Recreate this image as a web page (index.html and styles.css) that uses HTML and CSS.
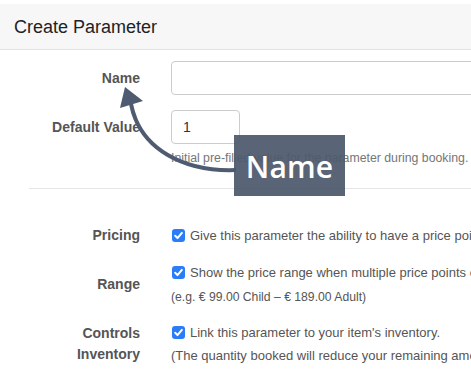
FILE: index.html
```html
<!DOCTYPE html>
<html lang="en">
<head>
<meta charset="utf-8">
<title>Create Parameter</title>
<link rel="stylesheet" href="styles.css">
</head>
<body>
<div class="page">
  <div class="modal-header">
    <h1 class="modal-title">Create Parameter</h1>
  </div>
  <form class="form">
    <div class="row row-name">
      <label class="label">Name</label>
      <div class="control"><input class="input input-wide" type="text"></div>
    </div>
    <div class="row row-default">
      <label class="label label-input">Default Value</label>
      <div class="control">
        <input class="input input-small" type="text" value="1">
        <p class="help">Initial pre-filled value for the parameter during booking.</p>
      </div>
    </div>
    <hr class="divider">
    <div class="row row-pricing">
      <label class="label">Pricing</label>
      <div class="control">
        <div class="check-line"><span class="checkbox"><svg viewBox="0 0 13 13" width="13" height="13"><path d="M3.2 6.8 L5.5 9.1 L9.9 3.9" fill="none" stroke="#fff" stroke-width="2" stroke-linecap="round" stroke-linejoin="round"/></svg></span><span class="check-text">Give this parameter the ability to have a price point.</span></div>
      </div>
    </div>
    <div class="row row-range">
      <label class="label">Range</label>
      <div class="control">
        <div class="check-line"><span class="checkbox"><svg viewBox="0 0 13 13" width="13" height="13"><path d="M3.2 6.8 L5.5 9.1 L9.9 3.9" fill="none" stroke="#fff" stroke-width="2" stroke-linecap="round" stroke-linejoin="round"/></svg></span><span class="check-text">Show the price range when multiple price points exist.</span></div>
        <p class="note note-range">(e.g. € 99.00 Child – € 189.00 Adult)</p>
      </div>
    </div>
    <div class="row row-inventory">
      <label class="label">Controls Inventory</label>
      <div class="control">
        <div class="check-line"><span class="checkbox"><svg viewBox="0 0 13 13" width="13" height="13"><path d="M3.2 6.8 L5.5 9.1 L9.9 3.9" fill="none" stroke="#fff" stroke-width="2" stroke-linecap="round" stroke-linejoin="round"/></svg></span><span class="check-text">Link this parameter to your item's inventory.</span></div>
        <p class="note note-inv">(The quantity booked will reduce your remaining amount.)</p>
      </div>
    </div>
  </form>

  <svg class="arrow" width="471" height="374" viewBox="0 0 471 374">
    <path d="M236 170 C185 172 140 150 131 104" fill="none" stroke="#4e5b70" stroke-width="4"/>
    <polygon points="125,87 120,108 143,101" fill="#4e5b70"/>
  </svg>
  <div class="callout">Name</div>
</div>
</body>
</html>
```

FILE: styles.css
```css
html, body {
  margin: 0;
  padding: 0;
  background: #fff;
  overflow: hidden;
}
body {
  font-family: "Liberation Sans", Arial, sans-serif;
  color: #555;
}
.page {
  position: relative;
  width: 620px;
  height: 374px;
  padding-top: 4px;
  box-sizing: border-box;
}
.modal-header {
  height: 45px;
  background: #f7f7f7;
  border-bottom: 1px solid #e3e3e3;
  display: flex;
  align-items: center;
  padding-left: 14px;
}
.modal-title {
  margin: 0;
  font-size: 18px;
  font-weight: normal;
  color: #222;
  position: relative;
  top: 1px;
}
.form {
  padding-top: 11px;
}
.row {
  display: grid;
  grid-template-columns: 140px 1fr;
  column-gap: 31px;
  align-items: center;
}
.label {
  padding-left: 30px;
  text-align: right;
  font-weight: bold;
  font-size: 14px;
  line-height: 21px;
  color: #555;
}
.row-default {
  margin-top: 15px;
  align-items: start;
}
.label-input {
  padding-top: 7px;
}
.input {
  box-sizing: border-box;
  height: 34px;
  border: 1px solid #ccc;
  border-radius: 4px;
  font-family: "Liberation Sans", Arial, sans-serif;
  font-size: 14px;
  color: #333;
  padding: 0 11px;
  display: block;
  outline: none;
  background: #fff;
}
.input-wide { width: 420px; }
.input-small { width: 69px; }
.help {
  margin: 6px 0 0;
  font-size: 12.3px;
  line-height: 16px;
  color: #767676;
  white-space: nowrap;
}
.divider {
  margin: 22px 0 0 29px;
  border: 0;
  border-top: 1px solid #e5e5e5;
  height: 0;
}
.row-pricing { margin-top: 36px; }
.row-range { margin-top: 16px; }
.row-inventory { margin-top: 15px; }
.check-line {
  display: flex;
  align-items: center;
  height: 20px;
  white-space: nowrap;
  padding-left: 1px;
}
.checkbox {
  width: 13px;
  height: 13px;
  border-radius: 3px;
  background: #2b7cf7;
  display: inline-flex;
  flex: none;
  margin-right: 5px;
}
.checkbox svg { display: block; }
.check-text {
  font-size: 13px;
  color: #555;
}
.note {
  margin: 0;
  white-space: nowrap;
  color: #555;
}
.note-range {
  margin-top: 5px;
  font-size: 12.2px;
  line-height: 20px;
}
.note-inv {
  margin-top: 4px;
  font-size: 13px;
  line-height: 20px;
}
.arrow {
  position: absolute;
  left: 0;
  top: 0;
}
.callout {
  position: absolute;
  left: 234px;
  top: 135px;
  width: 111px;
  height: 61px;
  background: rgba(76, 89, 108, 0.93);
  color: #fff;
  font-family: "Open Sans", sans-serif;
  font-weight: 600;
  font-size: 30px;
  letter-spacing: 0.2px;
  display: flex;
  align-items: center;
  justify-content: center;
  padding-top: 2px;
  box-sizing: border-box;
}
```
